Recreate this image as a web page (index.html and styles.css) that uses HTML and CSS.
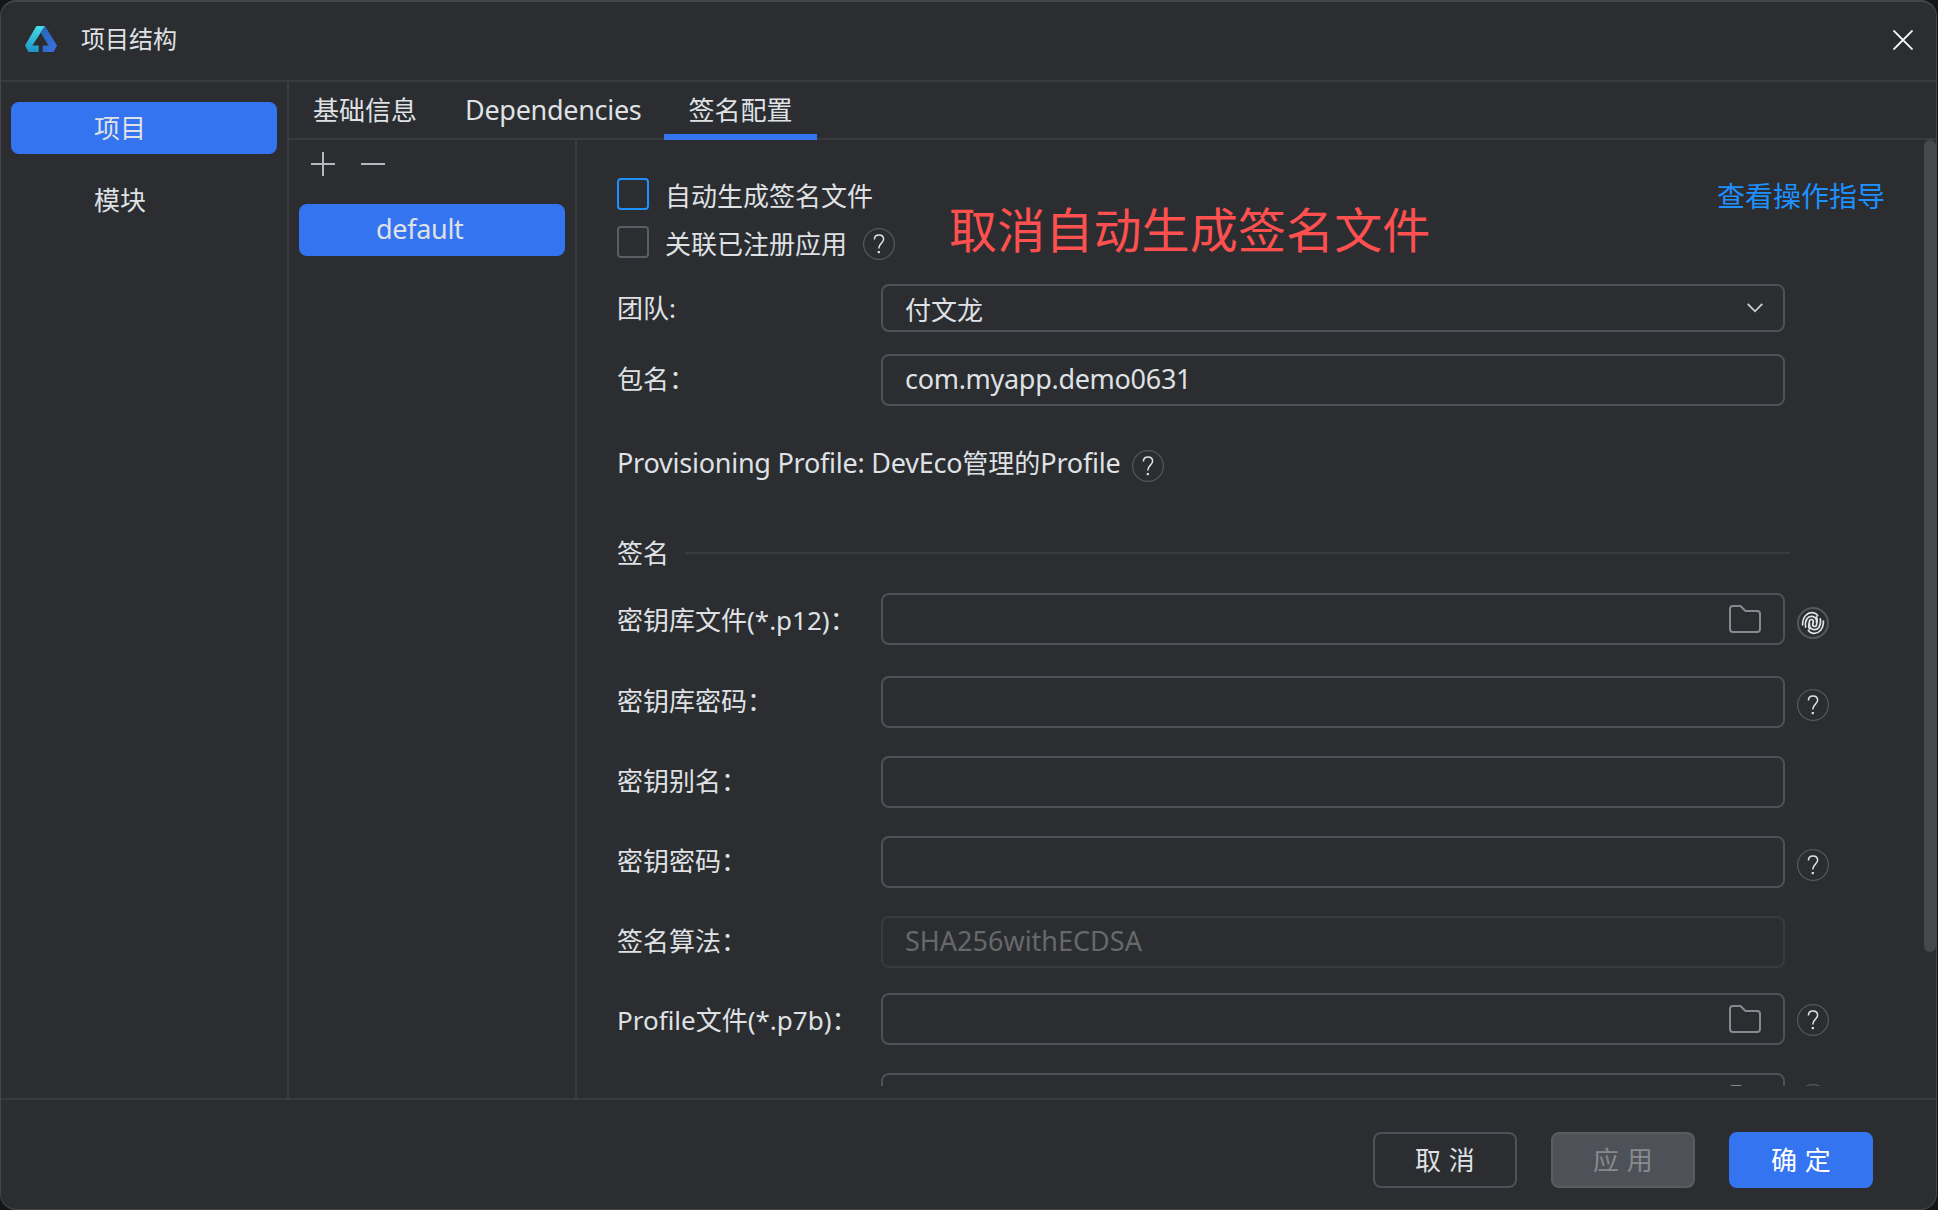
FILE: index.html
```html
<!DOCTYPE html>
<html lang="zh-CN">
<head>
<meta charset="utf-8">
<title>项目结构</title>
<link rel="stylesheet" href="styles.css">
</head>
<body>
<svg class="defs" width="0" height="0">
  <defs>
    <linearGradient id="cyan" x1="0" y1="0" x2="0" y2="1"><stop offset="0" stop-color="#46dde6"/><stop offset="1" stop-color="#1b93c6"/></linearGradient>
    <linearGradient id="blue" x1="0" y1="0" x2="1" y2="1"><stop offset="0" stop-color="#2467b8"/><stop offset="1" stop-color="#3c6fe0"/></linearGradient>
    <symbol id="help" viewBox="0 0 32 32">
      <circle cx="16" cy="16" r="15.4" fill="none" stroke="#56585d" stroke-width="1.2"/>
      <path d="M11.4 11.6C11.4 8.6 13.4 7 16 7s4.600 1.700 4.600 4.300c0 3.700-4.900 4.100-4.900 9.200" fill="none" stroke="#dfe1e5" stroke-width="1.500"/>
      <rect x="14.700" y="23" width="2.200" height="2.200" fill="#dfe1e5"/>
    </symbol>
    <symbol id="folder" viewBox="0 0 32 28">
      <path d="M1 4a3 3 0 0 1 3-3h7.500l5 5H28a3 3 0 0 1 3 3v15a3 3 0 0 1-3 3H4a3 3 0 0 1-3-3z" fill="none" stroke="#868a91" stroke-width="2"/>
    </symbol>
    <g id="whorl">
      <path d="M16 16v-1.200a1.900 1.900 0 0 0-3.800 0V18c0 2 .5 3.200 1.600 4.600"/>
      <path d="M9.600 21.500C7.300 15 9.500 9.700 14 9.700c3.200 0 5.200 2 5.200 5"/>
      <path d="M6.200 20C4.400 12.500 8 6 14.500 6c1.800 0 3.200.6 4.500 1.800"/>
    </g>
  </defs>
</svg>
<div class="window">
  <header class="titlebar">
    <svg class="logo" viewBox="0 0 28 26" preserveAspectRatio="none">
      <path d="M10 0h7.500L6.500 19.500H12V26H3L0 19.500z" fill="url(#cyan)"/>
      <path d="M13.700 6.500L17.500 0 28 19.500 25 26h-9.500v-6.500h5z" fill="url(#blue)"/>
    </svg>
    <h1>项目结构</h1>
    <svg class="close" width="20" height="20" viewBox="0 0 20 20"><path d="M.5.5l19 19M19.500.5l-19 19" stroke="#fff" stroke-width="1.800"/></svg>
  </header>
  <main class="body">
    <nav class="sidebar">
      <div class="item selected">项目</div>
      <div class="item">模块</div>
    </nav>
    <section class="content">
      <div class="tabs">
        <div class="tab">基础信息</div>
        <div class="tab latin">Dependencies</div>
        <div class="tab active">签名配置</div>
      </div>
      <div class="panes">
        <aside class="configs">
          <div class="tools">
            <svg width="24" height="24" viewBox="0 0 24 24"><path d="M0 12h24M12 0v24" stroke="#b4b8bf" stroke-width="2"/></svg>
            <svg width="24" height="24" viewBox="0 0 24 24"><path d="M0 12h24" stroke="#b4b8bf" stroke-width="2"/></svg>
          </div>
          <div class="config selected latin">default</div>
        </aside>
        <div class="form">
          <div class="options">
            <div class="option"><span class="check focus"></span><span class="caption">自动生成签名文件</span></div>
            <div class="option"><span class="check"></span><span class="caption">关联已注册应用</span><svg class="help"><use href="#help"/></svg></div>
            <a class="guide">查看操作指导</a>
            <div class="note">取消自动生成签名文件</div>
          </div>
          <div class="row team"><label>团队:</label><div class="field"><span>付文龙</span><svg class="chevron" width="16" height="10" viewBox="0 0 16 10"><path d="M.7.8L8 8.300 15.300.8" fill="none" stroke="#ced0d6" stroke-width="1.800"/></svg></div></div>
          <div class="row package"><label>包名：</label><div class="field latin">com.myapp.demo0631</div></div>
          <div class="profile"><span><span class="latin">Provisioning Profile: DevEco</span>管理的<span class="latin">Profile</span></span><svg class="help"><use href="#help"/></svg></div>
          <div class="group"><span>签名</span><i></i></div>
          <div class="row store"><label>密钥库文件(*.p12)：</label><div class="field"><svg class="folder"><use href="#folder"/></svg></div>
            <svg class="help" viewBox="0 0 32 32"><circle cx="16" cy="16" r="15" fill="none" stroke="#56585d" stroke-width="2"/>
              <g fill="none" stroke="#dfe1e5" stroke-width="1.700" stroke-linecap="round"><use href="#whorl" transform="rotate(12 16 16)"/><use href="#whorl" transform="rotate(192 16 16)"/></g></svg>
          </div>
          <div class="row"><label>密钥库密码：</label><div class="field"></div><svg class="help"><use href="#help"/></svg></div>
          <div class="row"><label>密钥别名：</label><div class="field"></div></div>
          <div class="row"><label>密钥密码：</label><div class="field"></div><svg class="help"><use href="#help"/></svg></div>
          <div class="row algorithm"><label>签名算法：</label><div class="field latin disabled">SHA256withECDSA</div></div>
          <div class="row p7b"><label>Profile文件(*.p7b)：</label><div class="field"><svg class="folder"><use href="#folder"/></svg></div><svg class="help"><use href="#help"/></svg></div>
          <div class="row cert"><label></label><div class="field"><svg class="folder"><use href="#folder"/></svg></div><svg class="help"><use href="#help"/></svg></div>
        </div>
        <div class="scrollbar"></div>
      </div>
    </section>
  </main>
  <footer class="actions">
    <button>取 消</button>
    <button class="off">应 用</button>
    <button class="primary">确 定</button>
  </footer>
</div>
</body>
</html>
```

FILE: styles.css
```css
* { box-sizing: border-box; }
body {
  margin: 0;
  background: #141517;
  color: #dfe1e5;
  font: 26px/36px "Noto Sans", "Noto Sans CJK SC", sans-serif;
}
.defs { position: absolute; }
svg { flex: none; display: block; }
.latin { font-size: 27px; letter-spacing: -0.3px; }
.window {
  width: 1937px;
  height: 1210px;
  display: flex;
  flex-direction: column;
  border: 1px solid #45464a;
  border-top: 2px solid #45464a;
  border-radius: 16px;
  background: #2b2d30;
  overflow: hidden;
}
.titlebar {
  height: 80px;
  flex: none;
  display: flex;
  align-items: center;
  padding: 0 23px 2px 24px;
  border-bottom: 2px solid #393b40;
}
.logo { width: 32px; height: 26px; margin-top: -2px; }
h1 { margin: -2px auto 0 24px; font-size: 24px; font-weight: 400; }
.body { height: 1016px; flex: none; display: flex; }
.sidebar {
  width: 288px;
  padding: 20px 10px;
  border-right: 2px solid #393b40;
}
.item { height: 52px; padding-left: 83px; line-height: 52px; border-radius: 8px; }
.item + .item { margin-top: 20px; }
.selected { background: #3574f0; }
.content { flex: 1; min-width: 0; display: flex; flex-direction: column; }
.tabs {
  height: 58px;
  flex: none;
  display: flex;
  border-bottom: 2px solid #393b40;
}
.tab { height: 58px; padding: 0 24px; line-height: 57px; }
.tab.latin { padding-right: 23px; line-height: 56px; }
.tab.active { border-bottom: 6px solid #3574f0; }
.panes { flex: 1; min-height: 0; display: flex; }
.configs {
  width: 288px;
  flex: none;
  padding: 12px 10px;
  border-right: 2px solid #393b40;
}
.tools { display: flex; gap: 26px; padding-left: 12px; margin-bottom: 28px; }
.config { height: 52px; line-height: 50px; padding-left: 77px; border-radius: 8px; }
.form { width: 1348px; height: 946px; padding: 38px 0 0 40px; overflow: hidden; }
.options { position: relative; height: 106px; display: flex; flex-direction: column; gap: 16px; }
.option { display: flex; align-items: center; gap: 16px; height: 32px; }
.caption { padding-top: 4px; }
.check { width: 32px; height: 32px; border: 2px solid #5a5d63; border-radius: 4px; }
.check.focus { border-color: #1e90ff; }
.help { width: 32px; height: 32px; }
.option .help { margin-top: 4px; }
.guide { position: absolute; left: 1100px; top: 0; font-size: 28px; color: #1e90ff; }
.note { position: absolute; left: 332px; top: 22px; font-size: 48px; letter-spacing: 0.15px; line-height: 60px; color: #ff5050; white-space: nowrap; }
.row { display: flex; align-items: center; height: 52px; margin-bottom: 28px; }
.row label { width: 264px; flex: none; white-space: nowrap; padding-bottom: 2px; }
.field {
  width: 904px;
  height: 52px;
  flex: none;
  display: flex;
  align-items: center;
  padding: 0 22px 2px;
  border: 2px solid #4e5157;
  border-radius: 8px;
}
.row .help { margin: 6px 0 0 12px; }
.team { height: 48px; margin-bottom: 22px; }
.team label { padding-bottom: 0; }
.team .field { height: 48px; padding-bottom: 0; }
.team span { padding-top: 3px; }
.chevron { margin: 0 -2px 0 auto; }
.package { margin-bottom: 39px; }
.profile { display: flex; align-items: center; gap: 12px; height: 36px; margin-bottom: 54px; }
.profile .latin { letter-spacing: -0.24px; }
.profile .help { margin-top: 5px; }
.group { display: flex; align-items: center; gap: 16px; height: 36px; margin-bottom: 22px; }
.group i { width: 1105px; height: 2px; background: #393b40; }
.folder { width: 32px; height: 28px; margin: 2px 0 0 auto; }
.store { margin-bottom: 31px; }
.store label, .p7b label { padding: 2px 0 0; }
.store .help { margin-top: 8px; }
.algorithm { margin-bottom: 25px; }
.disabled { border-color: #393b40; color: #66686c; letter-spacing: 0; }
.p7b .help { margin-top: 2px; }
.cert .help { margin-top: 1px; }
.scrollbar { width: 12px; height: 812px; margin-left: auto; border-radius: 6px; background: #474849; }
.actions {
  flex: 1;
  display: flex;
  justify-content: flex-end;
  gap: 34px;
  padding: 32px 63px 0 0;
  border-top: 2px solid #393b40;
}
button {
  width: 144px;
  height: 56px;
  padding: 0;
  font: inherit;
  word-spacing: 1px;
  color: #dfe1e5;
  background: none;
  border: 2px solid #4e5157;
  border-radius: 8px;
}
button.off { color: #868a91; background: #4e5157; border-color: #5a5c5e; }
button.primary { color: #fff; background: #3574f0; border-color: #3574f0; }
```
